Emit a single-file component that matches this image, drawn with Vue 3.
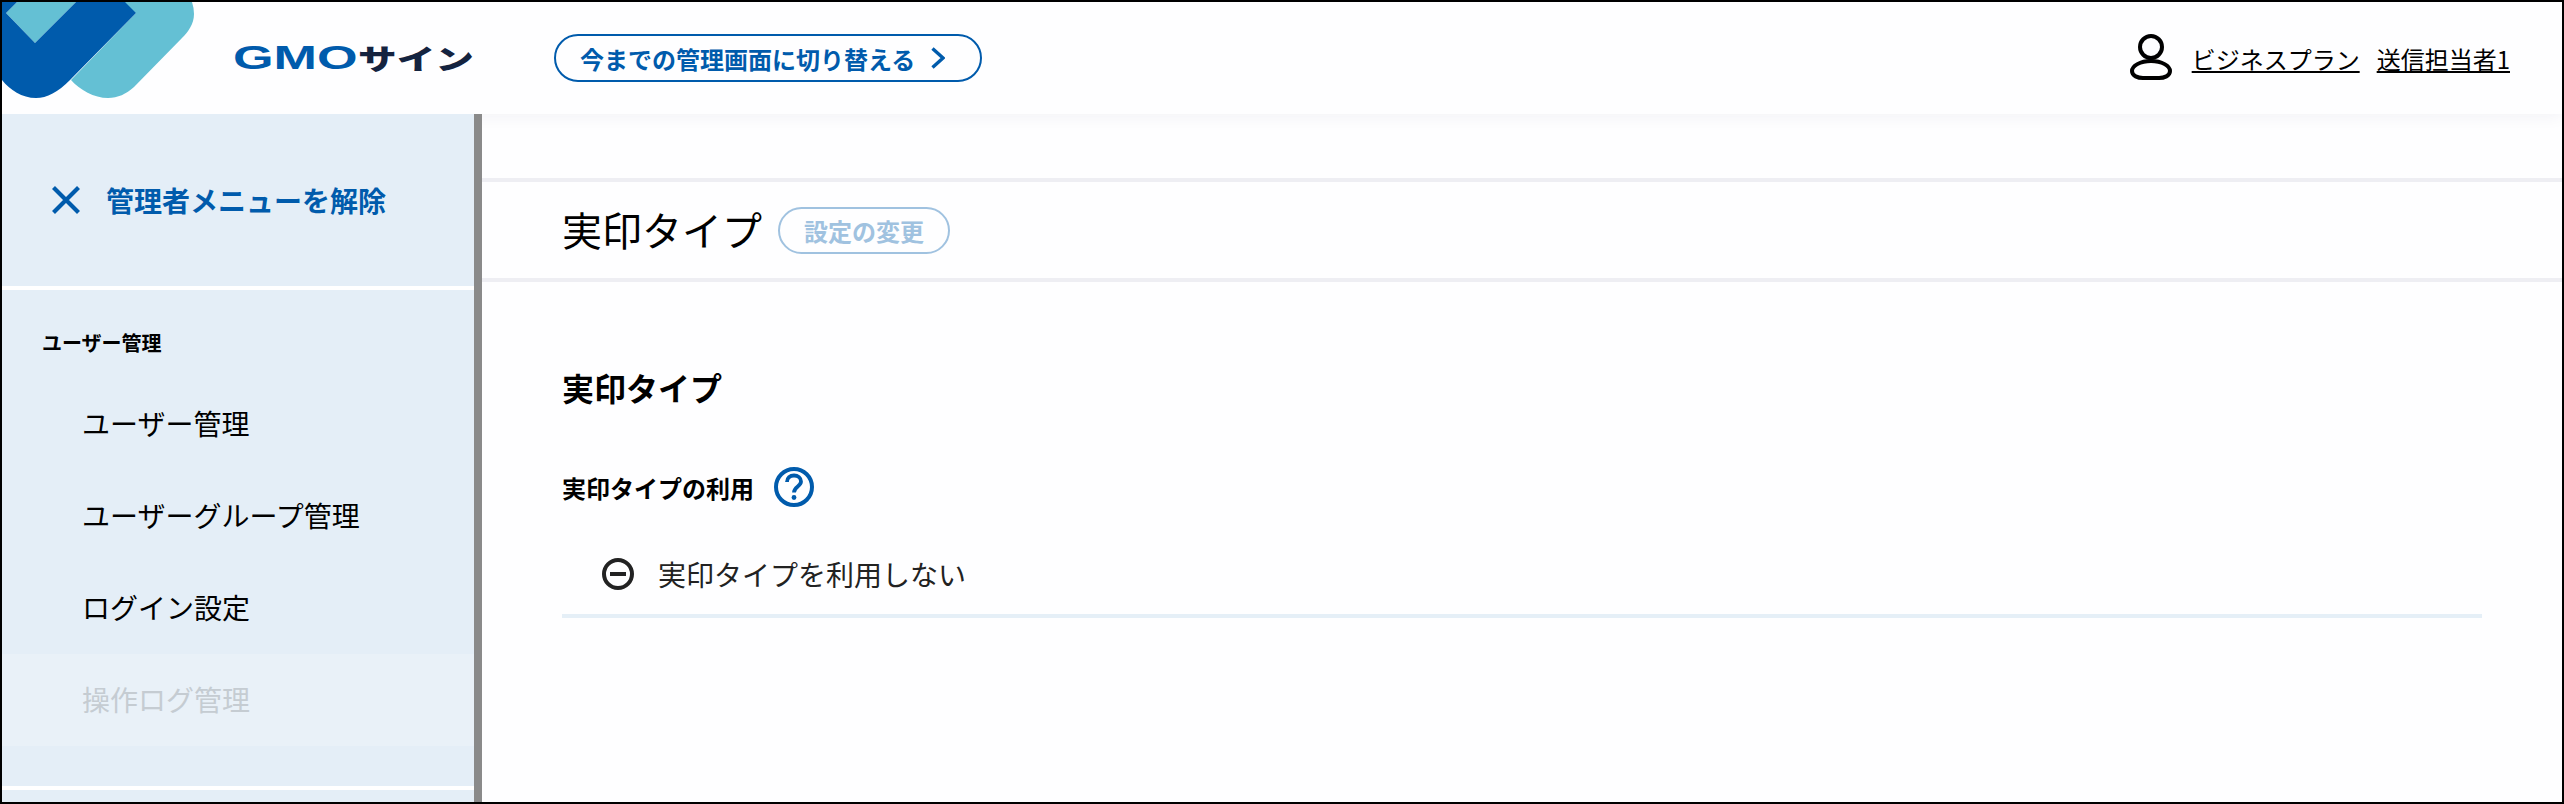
<script setup>
const menuItems = [
  { label: 'ユーザー管理' },
  { label: 'ユーザーグループ管理' },
  { label: 'ログイン設定' },
  { label: '操作ログ管理', disabled: true },
]
</script>

<template>
  <div class="page">
    <header class="top">
      <svg class="mark" width="192" height="96" viewBox="2 2 192 96">
        <path fill="#64c0d4" d="M17 2H76L35 43L6 13Z" />
        <path fill="#64c0d4" d="M76 2H192Q194 8 194 14C194 24 188 32 182 38L134 87C126 94 118 98 108 98C94 98 80 90 71 80L136 13Z" />
        <path fill="#005bac" d="M2 2H17L6 13L35 43L76 2H125L136 13L70 80C58 92 47 98 36 98C22 98 10 90 2 80Z" />
      </svg>
      <div class="logo">
        <span class="logo-gmo">GMO</span>
        <span class="logo-sign">サイン</span>
      </div>
      <button class="switch">
        今までの管理画面に切り替える
        <svg width="14" height="22" viewBox="0 0 14 22">
          <path d="M1.5 1.5L12 11L1.5 20.5" fill="none" stroke="#005bac" stroke-width="3.4" />
        </svg>
      </button>
      <div class="account">
        <svg width="42" height="48" viewBox="0 0 42 48">
          <circle cx="21" cy="13" r="11" fill="none" stroke="#000" stroke-width="4" />
          <path d="M21 27C32 27 40 32 40 37C40 42 34 44 29 44H13C8 44 2 42 2 37C2 32 10 27 21 27Z" fill="none" stroke="#000" stroke-width="4" />
        </svg>
        <a class="plan">ビジネスプラン</a>
        <a class="sender">送信担当者1</a>
      </div>
    </header>

    <div class="body">
      <aside class="side">
        <div class="admin-off">
          <svg width="28" height="28" viewBox="0 0 28 28">
            <path d="M1.5 1.5L26.5 26.5M26.5 1.5L1.5 26.5" fill="none" stroke="#005bac" stroke-width="4.2" />
          </svg>
          <span>管理者メニューを解除</span>
        </div>
        <div class="group">
          <div class="group-title">ユーザー管理</div>
          <div
            v-for="item in menuItems"
            :key="item.label"
            :class="['menu-item', { 'is-disabled': item.disabled }]"
          >
            {{ item.label }}
          </div>
        </div>
      </aside>

      <main class="main">
        <div class="blank"></div>
        <div class="title-row">
          <h1>実印タイプ</h1>
          <button class="edit">設定の変更</button>
        </div>
        <section class="content">
          <h2>実印タイプ</h2>
          <div class="label">
            <span>実印タイプの利用</span>
            <svg width="40" height="40" viewBox="0 0 40 40">
              <circle cx="20" cy="20" r="18" fill="none" stroke="#005bac" stroke-width="4" />
              <path d="M13 15C13 11 16 8.500 20 8.500C24 8.500 27 11 27 14.500C27 19.500 20 19.500 20 25.500" fill="none" stroke="#005bac" stroke-width="3.8" />
              <circle cx="20" cy="30.500" r="2.400" fill="#005bac" />
            </svg>
          </div>
          <div class="value">
            <svg width="32" height="32" viewBox="0 0 32 32">
              <circle cx="16" cy="16" r="14" fill="none" stroke="#222" stroke-width="4" />
              <path d="M8 16H24" stroke="#222" stroke-width="4" />
            </svg>
            <span>実印タイプを利用しない</span>
          </div>
        </section>
      </main>
    </div>
  </div>
</template>

<style>
html,
body {
  margin: 0;
  overflow: hidden;
}
</style>

<style scoped>
.page {
  width: 2564px;
  height: 804px;
  box-sizing: border-box;
  border: 2px solid #000;
  display: flex;
  flex-direction: column;
  overflow: hidden;
  background: #fefeff;
  color: #000;
  font-family: 'Noto Sans CJK JP', 'Noto Sans', sans-serif;
}

/* header */
.top {
  flex: none;
  height: 112px;
  display: flex;
  align-items: center;
  position: relative;
  z-index: 1;
  background: #fefeff;
  box-shadow: 0 2px 16px rgba(40, 40, 90, 0.06);
}
.mark {
  flex: none;
  align-self: flex-start;
}
.logo {
  display: flex;
  align-items: center;
  width: 240px;
  height: 30px;
  margin-left: 39px;
  font-weight: 700;
}
.logo-gmo {
  flex: none;
  width: 125px;
  font-family: 'Liberation Sans', sans-serif;
  font-size: 33px;
  color: #005bac;
  transform: scaleX(1.58);
  transform-origin: left center;
}
.logo-sign {
  flex: none;
  font-size: 28px;
  line-height: 30px;
  font-weight: 900;
  color: #14233f;
  transform: scaleX(1.38);
  transform-origin: left center;
}
.switch {
  display: flex;
  align-items: center;
  gap: 16px;
  box-sizing: border-box;
  width: 428px;
  height: 48px;
  margin-left: 81px;
  padding: 0 0 0 24px;
  border: 2px solid #005bac;
  border-radius: 24px;
  background: transparent;
  color: #005bac;
  font-family: inherit;
  font-size: 24px;
  font-weight: 700;
  white-space: nowrap;
}
.account {
  display: flex;
  align-items: center;
  margin-left: auto;
  padding-right: 52px;
  font-size: 24px;
}
.plan {
  margin-left: 20px;
  text-decoration: underline;
}
.sender {
  margin-left: 17px;
  text-decoration: underline;
}

/* body */
.body {
  flex: 1;
  min-height: 0;
  display: flex;
}
.side {
  flex: none;
  position: relative;
  z-index: 2;
  box-sizing: border-box;
  width: 480px;
  background: #e4eef7;
  border-right: 8px solid #8a8a8a;
}
.admin-off {
  box-sizing: border-box;
  height: 176px;
  padding: 0 0 0 50px;
  display: flex;
  align-items: center;
  gap: 26px;
  border-bottom: 4px solid #fff;
  color: #005bac;
  font-size: 28px;
  font-weight: 700;
}
.group {
  padding-bottom: 40px;
  border-bottom: 4px solid #fff;
}
.group-title {
  box-sizing: border-box;
  height: 88px;
  padding: 16px 0 0 40px;
  display: flex;
  align-items: center;
  font-size: 20px;
  font-weight: 700;
}
.menu-item {
  box-sizing: border-box;
  height: 92px;
  padding: 0 0 2px 80px;
  display: flex;
  align-items: center;
  font-size: 28px;
}
.menu-item.is-disabled {
  background: #e9f1f8;
  color: #c5ccd2;
}

/* main */
.main {
  flex: 1;
  min-width: 0;
}
.blank {
  box-sizing: border-box;
  height: 68px;
  border-bottom: 4px solid #eeeef3;
}
.title-row {
  box-sizing: border-box;
  height: 100px;
  padding: 0 0 0 80px;
  display: flex;
  align-items: center;
  gap: 16px;
  border-bottom: 4px solid #eeeef3;
}
h1 {
  margin: 0 0 2px;
  font-size: 40px;
  font-weight: 400;
}
.edit {
  box-sizing: border-box;
  width: 172px;
  height: 47px;
  padding: 0;
  border: 2px solid #a0c2e0;
  border-radius: 24px;
  background: transparent;
  color: #a0c2e0;
  font-family: inherit;
  font-size: 24px;
  font-weight: 700;
}
.content {
  padding: 0 80px;
}
h2 {
  margin: 0;
  height: 46px;
  padding-top: 82px;
  display: flex;
  align-items: center;
  font-size: 32px;
  font-weight: 700;
}
.label {
  height: 40px;
  margin-top: 57px;
  display: flex;
  align-items: center;
  gap: 20px;
  font-size: 24px;
  font-weight: 700;
}
.value {
  box-sizing: border-box;
  height: 111px;
  padding: 51px 0 0 40px;
  display: flex;
  align-items: flex-start;
  gap: 24px;
  border-bottom: 4px solid #e5eff7;
  color: #222;
  font-size: 28px;
  line-height: 32px;
}
</style>
